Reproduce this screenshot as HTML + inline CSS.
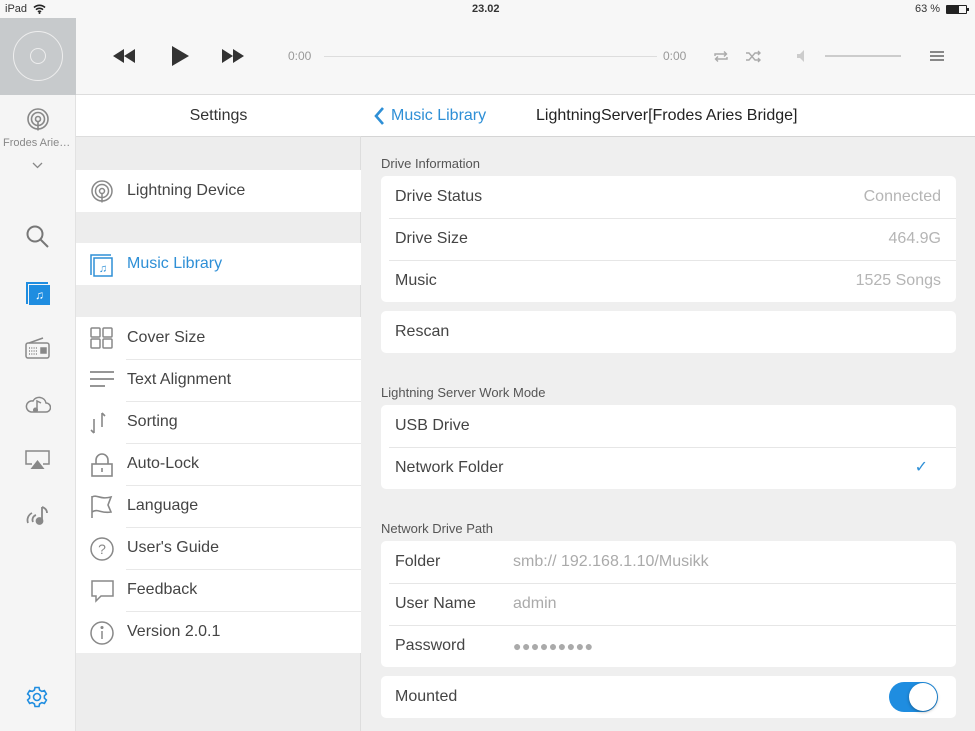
<!DOCTYPE html>
<html><head><meta charset="utf-8"><style>
*{margin:0;padding:0;box-sizing:border-box}
body{width:975px;height:731px;overflow:hidden;background:#efefef;font-family:"Liberation Sans",sans-serif;color:#333;position:relative}
.a{position:absolute}
.card{position:absolute;left:381px;width:575px;background:#fff;border-radius:5px}
.card .r{position:relative;height:42px;line-height:42px;font-size:16px;padding-left:14px;color:#444}
.card .r+.r:before{content:"";position:absolute;left:8px;right:0;top:0;border-top:1px solid #e6e6e6}
.v{position:absolute;right:15px;top:0;color:#b5b5b5}
.f{position:absolute;left:132px;top:0;color:#aaa}
.lbl{position:absolute;left:381px;font-size:13px;color:#555}
.sl{position:absolute;left:76px;width:285px;background:#fff}
.sl .r{position:relative;height:42px;line-height:42px;font-size:16px;padding-left:51px;color:#444}
.sl .r+.r:before{content:"";position:absolute;left:50px;right:0;top:0;border-top:1px solid #e8e8e8}
.sl svg{position:absolute;left:14px;top:10px}
</style></head><body>
<div class="a" style="left:0;top:0;width:975px;height:18px;background:#f7f7f7;font-size:11px;line-height:18px">
<span class="a" style="left:5px">iPad</span>
<svg class="a" style="left:33px;top:4px" width="13" height="10" viewBox="0 0 13 10"><path d="M1 3.5a8 8 0 0 1 11 0M3 5.7a5 5 0 0 1 7 0M5 7.8a2 2 0 0 1 3 0" stroke="#222" stroke-width="1.6" fill="none"/><circle cx="6.5" cy="9" r="1" fill="#222"/></svg>
<span class="a" style="left:472px;font-weight:bold">23.02</span>
<span class="a" style="left:915px">63 %</span>
<div class="a" style="left:946px;top:5px;width:21px;height:9px;border:1px solid #222;border-radius:1px"><div style="width:12px;height:7px;background:#222"></div></div>
<div class="a" style="left:967px;top:8px;width:2px;height:3px;background:#222"></div>
</div>
<div class="a" style="left:0;top:18px;width:975px;height:77px;background:#f7f7f7;border-bottom:1px solid #ddd"></div>
<div class="a" style="left:0;top:18px;width:76px;height:77px;background:#c7cacc"></div>
<div class="a" style="left:13px;top:31px;width:50px;height:50px;border:1px solid #eee;border-radius:50%"></div>
<div class="a" style="left:30px;top:48px;width:16px;height:16px;border:1px solid #eee;border-radius:50%"></div>
<svg class="a" style="left:113px;top:49px" width="22" height="14"><path d="M11 0v14L0 7zM22 0v14L11 7z" fill="#333"/></svg>
<svg class="a" style="left:172px;top:46px" width="17" height="20"><path d="M0 0v20l17-10z" fill="#333"/></svg>
<svg class="a" style="left:222px;top:49px" width="22" height="14"><path d="M0 0v14l11-7zM11 0v14l11-7z" fill="#333"/></svg>
<span class="a" style="left:288px;top:49px;font-size:12px;color:#999">0:00</span>
<div class="a" style="left:324px;top:56px;width:333px;height:1px;background:#ddd"></div>
<span class="a" style="left:663px;top:49px;font-size:12px;color:#999">0:00</span>
<svg class="a" style="left:713px;top:50px" width="16" height="13" fill="none" stroke="#aaa" stroke-width="1.4"><path d="M2 6V4h11M11 1.5l2.5 2.5L11 6.5M14 7v2H3M5 11.5L2.5 9 5 6.5"/></svg>
<svg class="a" style="left:746px;top:50px" width="16" height="13" fill="none" stroke="#aaa" stroke-width="1.4"><path d="M0 3h3l6 7h5M0 10h3l6-7h5M12 1l2 2-2 2M12 8l2 2-2 2"/></svg>
<svg class="a" style="left:797px;top:50px" width="8" height="12"><path d="M0 4h3l4-4v12L3 8H0z" fill="#ccc"/></svg>
<div class="a" style="left:825px;top:55px;width:76px;height:2px;background:#ccc"></div>
<div class="a" style="left:930px;top:51px;width:14px;height:10px;border-top:2px solid #888;border-bottom:2px solid #888"></div>
<div class="a" style="left:930px;top:55px;width:14px;height:2px;background:#888"></div>
<div class="a" style="left:0;top:95px;width:76px;height:636px;background:#f5f5f5;border-right:1px solid #e2e2e2"></div>
<svg class="a" style="left:26px;top:108px" width="24" height="24" fill="none" stroke="#888" stroke-width="1.6"><circle cx="12" cy="11" r="10"/><circle cx="12" cy="11" r="6.5"/><circle cx="12" cy="11" r="2.5"/><path d="M12 13.5v9"/></svg>
<span class="a" style="left:3px;top:137px;font-size:11px;color:#888">Frodes Arie…</span>
<svg class="a" style="left:32px;top:162px" width="11" height="7" fill="none" stroke="#888" stroke-width="1.3"><path d="M1 1l4.5 4.5L10 1"/></svg>
<svg class="a" style="left:26px;top:225px" width="24" height="24" fill="none" stroke="#777" stroke-width="2"><circle cx="9" cy="9" r="7.5"/><path d="M14.5 14.5l7.5 7.5"/></svg>
<div class="a" style="left:26px;top:282px;width:22px;height:22px;border-left:2px solid #1f8de0;border-top:2px solid #1f8de0"></div>
<div class="a" style="left:29px;top:285px;width:21px;height:20px;background:#1f8de0;color:#fff;font-size:12px;text-align:center;line-height:20px">♫</div>
<svg class="a" style="left:25px;top:337px" width="25" height="22" fill="none" stroke="#888" stroke-width="1.5"><rect x="1" y="6" width="23" height="15" rx="2"/><path d="M4 6L18 1"/><rect x="16" y="11" width="5" height="5" fill="#888"/><path d="M4 11h9M4 14h9M4 17h9" stroke-dasharray="1 1.3"/></svg>
<svg class="a" style="left:25px;top:393px" width="26" height="22" fill="none" stroke="#888" stroke-width="1.5"><path d="M6 19h15a4.5 4.5 0 0 0 0-9 7 7 0 0 0-13-2A5.5 5.5 0 0 0 6 19z"/><path d="M12 17V8l4 2" /><circle cx="10.5" cy="17" r="1.8" fill="#888"/></svg>
<svg class="a" style="left:25px;top:450px" width="25" height="20" fill="none" stroke="#888" stroke-width="1.5"><path d="M7 14H1V1h23v13h-6"/><path d="M12.5 10l7 9h-14z" fill="#888" stroke="none"/></svg>
<svg class="a" style="left:25px;top:504px" width="26" height="22" fill="none" stroke="#888" stroke-width="1.8"><path d="M7 9a8 8 0 0 0-4 10M11 11a5 5 0 0 0-3 7"/><path d="M17 3v13" /><path d="M17 3c3 1 5 3 5 6" /><circle cx="14.5" cy="17" r="3" fill="#888"/></svg>
<svg class="a" style="left:26px;top:686px" width="22" height="22" fill="none" stroke="#1f8de0" stroke-width="1.6"><circle cx="11" cy="11" r="3.5"/><path d="M9 1.5h4l.6 2.6 2.2 1.3 2.6-.8 2 3.4-2 1.8v2.4l2 1.8-2 3.4-2.6-.8-2.2 1.3-.6 2.6H9l-.6-2.6-2.2-1.3-2.6.8-2-3.4 2-1.8V9.8l-2-1.8 2-3.4 2.6.8 2.2-1.3z"/></svg>
<div class="a" style="left:76px;top:95px;width:285px;height:636px;background:#ededed;border-right:1px solid #ddd"></div>
<div class="a" style="left:76px;top:95px;width:285px;height:42px;background:#fff;border-bottom:1px solid #ddd;text-align:center;font-size:16px;line-height:42px;color:#333">Settings</div>
<div class="sl" style="top:170px"><div class="r">Lightning Device<svg width="24" height="24" fill="none" stroke="#888" stroke-width="1.5"><circle cx="12" cy="11" r="10"/><circle cx="12" cy="11" r="6.5"/><circle cx="12" cy="11" r="2.5"/><path d="M12 13.5v9"/></svg></div></div>
<div class="sl" style="top:243px"><div class="r" style="color:#2e8fd6">Music Library<svg width="24" height="24" fill="none" stroke="#2e8fd6" stroke-width="1.5"><path d="M1 22V2h20"/><rect x="4" y="5" width="18" height="18"/><text x="13" y="19" font-size="11" fill="#2e8fd6" stroke="none" text-anchor="middle">♫</text></svg></div></div>
<div class="sl" style="top:317px">
<div class="r">Cover Size<svg width="24" height="22" fill="none" stroke="#888" stroke-width="1.5"><rect x="1" y="1" width="9" height="9" rx="1"/><rect x="13" y="1" width="9" height="9" rx="1"/><rect x="1" y="12" width="9" height="9" rx="1"/><rect x="13" y="12" width="9" height="9" rx="1"/></svg></div>
<div class="r">Text Alignment<svg width="24" height="22" fill="none" stroke="#888" stroke-width="1.8"><path d="M0 3h24M0 10h24M0 17h15"/></svg></div>
<div class="r">Sorting<svg width="24" height="24" fill="none" stroke="#888" stroke-width="1.6"><path d="M4 8v14M1 19l3 3M12 2v14M12 2l3 3"/></svg></div>
<div class="r">Auto-Lock<svg width="24" height="24" fill="none" stroke="#888" stroke-width="1.6"><path d="M6 11V7a6 6 0 0 1 12 0v4"/><rect x="2" y="11" width="20" height="12"/><path d="M12 15v4"/></svg></div>
<div class="r">Language<svg width="24" height="24" fill="none" stroke="#888" stroke-width="1.6"><path d="M2 1v22M2 2c5-3 8 3 19 0l-3 8 3 7c-10 2-13-4-19 0"/></svg></div>
<div class="r">User's Guide<svg width="24" height="24" fill="none" stroke="#888" stroke-width="1.5"><circle cx="12" cy="12" r="11"/><text x="12" y="17" font-size="14" fill="#888" stroke="none" text-anchor="middle">?</text></svg></div>
<div class="r">Feedback<svg width="24" height="24" fill="none" stroke="#888" stroke-width="1.5"><path d="M2 2h21v15H11l-5 5v-5H2z"/></svg></div>
<div class="r">Version 2.0.1<svg width="24" height="24" fill="none" stroke="#888" stroke-width="1.5"><circle cx="12" cy="12" r="11"/><path d="M12 10v8"/><circle cx="12" cy="6.5" r="0.8" fill="#888"/></svg></div>
</div>
<div class="a" style="left:361px;top:95px;width:614px;height:42px;background:#fff;border-bottom:1px solid #d5d5d5"></div>
<svg class="a" style="left:373px;top:106px" width="12" height="20" fill="none" stroke="#2e8fd6" stroke-width="2.6"><path d="M10 2L3 10l7 8"/></svg>
<span class="a" style="left:391px;top:107px;font-size:16px;color:#2e8fd6">Music Library</span>
<span class="a" style="left:536px;top:107px;font-size:16px;color:#222">LightningServer[Frodes Aries Bridge]</span>
<div class="lbl" style="top:156px">Drive Information</div>
<div class="card" style="top:176px">
<div class="r">Drive Status<span class="v">Connected</span></div>
<div class="r">Drive Size<span class="v">464.9G</span></div>
<div class="r">Music<span class="v">1525 Songs</span></div>
</div>
<div class="card" style="top:311px"><div class="r">Rescan</div></div>
<div class="lbl" style="top:385px">Lightning Server Work Mode</div>
<div class="card" style="top:405px">
<div class="r">USB Drive</div>
<div class="r">Network Folder<span class="v" style="right:28px;color:#2e8fd6">✓</span></div>
</div>
<div class="lbl" style="top:521px">Network Drive Path</div>
<div class="card" style="top:541px">
<div class="r">Folder<span class="f">smb:// 192.168.1.10/Musikk</span></div>
<div class="r">User Name<span class="f">admin</span></div>
<div class="r">Password<span class="f" style="letter-spacing:0.5px;font-size:14px">●●●●●●●●●</span></div>
</div>
<div class="card" style="top:676px"><div class="r">Mounted
<div class="a" style="right:18px;top:6px;width:49px;height:30px;border-radius:15px;background:#1f8de0"></div>
<div class="a" style="right:19px;top:7px;width:28px;height:28px;border-radius:50%;background:#fff;box-shadow:0 1px 3px rgba(0,0,0,.35)"></div>
</div></div>
</body></html>
